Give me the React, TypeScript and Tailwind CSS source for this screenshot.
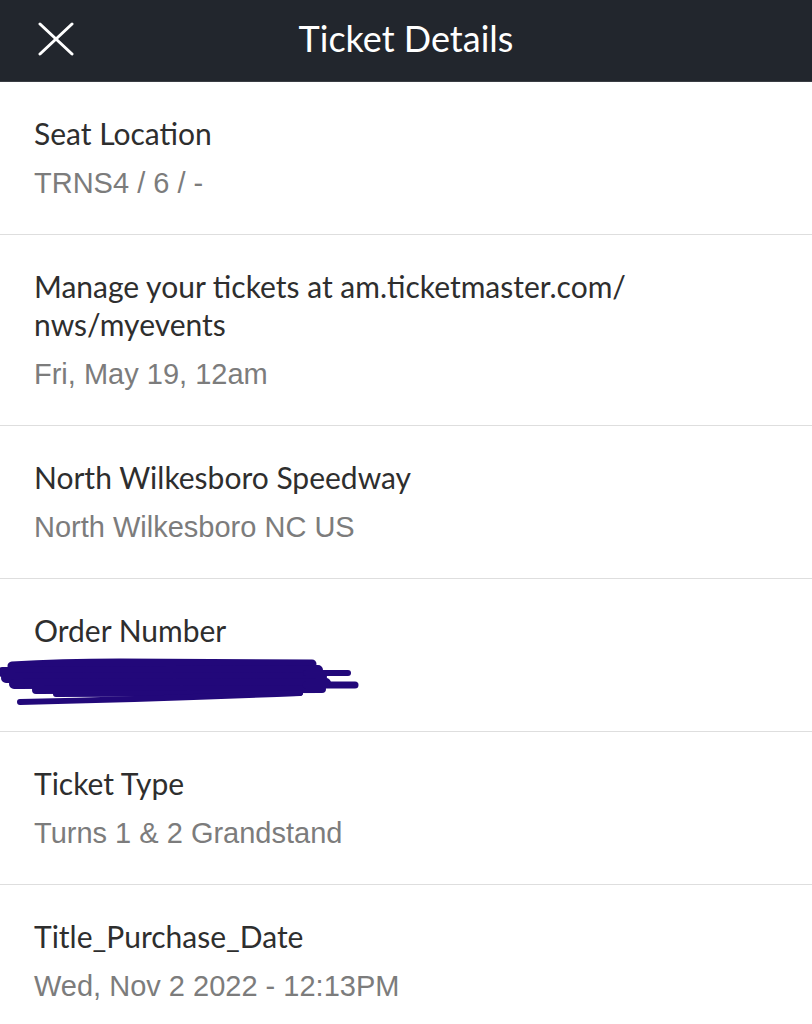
import React from 'react';

type Row = {
  label: React.ReactNode;
  value?: string;
  redacted?: boolean;
};

const rows: Row[] = [
  { label: 'Seat Location', value: 'TRNS4 / 6 / -' },
  {
    label: (
      <>
        Manage your tickets at am.ticketmaster.com/
        <br />
        nws/myevents
      </>
    ),
    value: 'Fri, May 19, 12am',
  },
  { label: 'North Wilkesboro Speedway', value: 'North Wilkesboro NC US' },
  { label: 'Order Number', redacted: true },
  { label: 'Ticket Type', value: 'Turns 1 & 2 Grandstand' },
  { label: 'Title_Purchase_Date', value: 'Wed, Nov 2 2022 - 12:13PM' },
];

// marker scribble hiding the order number
const Scribble: React.FC = () => (
  <svg width="360" height="56" viewBox="0 0 360 56" className="block -ml-[34px]">
    <g stroke="#22087a" strokeLinecap="round" fill="none">
      <path d="M12,13 Q60,10 120,10 L312,11" strokeWidth="9" />
      <path d="M2,19 L318,17" strokeWidth="10" />
      <path d="M6,25 L322,24" strokeWidth="10" />
      <path d="M14,31 L326,30" strokeWidth="10" />
      <path d="M36,37 L322,36" strokeWidth="8" />
      <path d="M56,41 L300,40" strokeWidth="6" />
      <path d="M306,20 L348,20" strokeWidth="6" />
      <path d="M306,32 L355,32" strokeWidth="7" />
      <path d="M20,49 Q150,46 300,40" strokeWidth="6" />
    </g>
  </svg>
);

export default function App() {
  return (
    <div className="w-[812px] h-[1024px] overflow-hidden bg-white font-['Lato','Noto_Sans',sans-serif]">
      <header className="h-[82px] bg-[#22262d] border-b border-[#3a3d44] flex items-center relative">
        <button className="absolute left-[38px] top-[22px] w-[36px] h-[34px]" aria-label="Close">
          <svg viewBox="0 0 36 34" width="36" height="34">
            <path d="M2,2 L34,32 M34,2 L2,32" stroke="#ffffff" strokeWidth="3" strokeLinecap="round" />
          </svg>
        </button>
        <h1 className="w-full text-center text-white text-[36px] leading-none pb-[6px]">Ticket Details</h1>
      </header>

      <main>
        {rows.map((row, i) => (
          <div key={i} className="px-[34px] pt-8 pb-8 border-b border-[#dedede]">
            <div className="text-[#2e2e2e] text-[30px] leading-[38px]">{row.label}</div>
            {row.redacted ? (
              <div className="mt-1 h-[46px]">
                <Scribble />
              </div>
            ) : (
              <div className="mt-3 text-[#7c7c7c] text-[29px] leading-[38px] font-['Liberation_Sans',sans-serif]">
                {row.value}
              </div>
            )}
          </div>
        ))}
      </main>
    </div>
  );
}
